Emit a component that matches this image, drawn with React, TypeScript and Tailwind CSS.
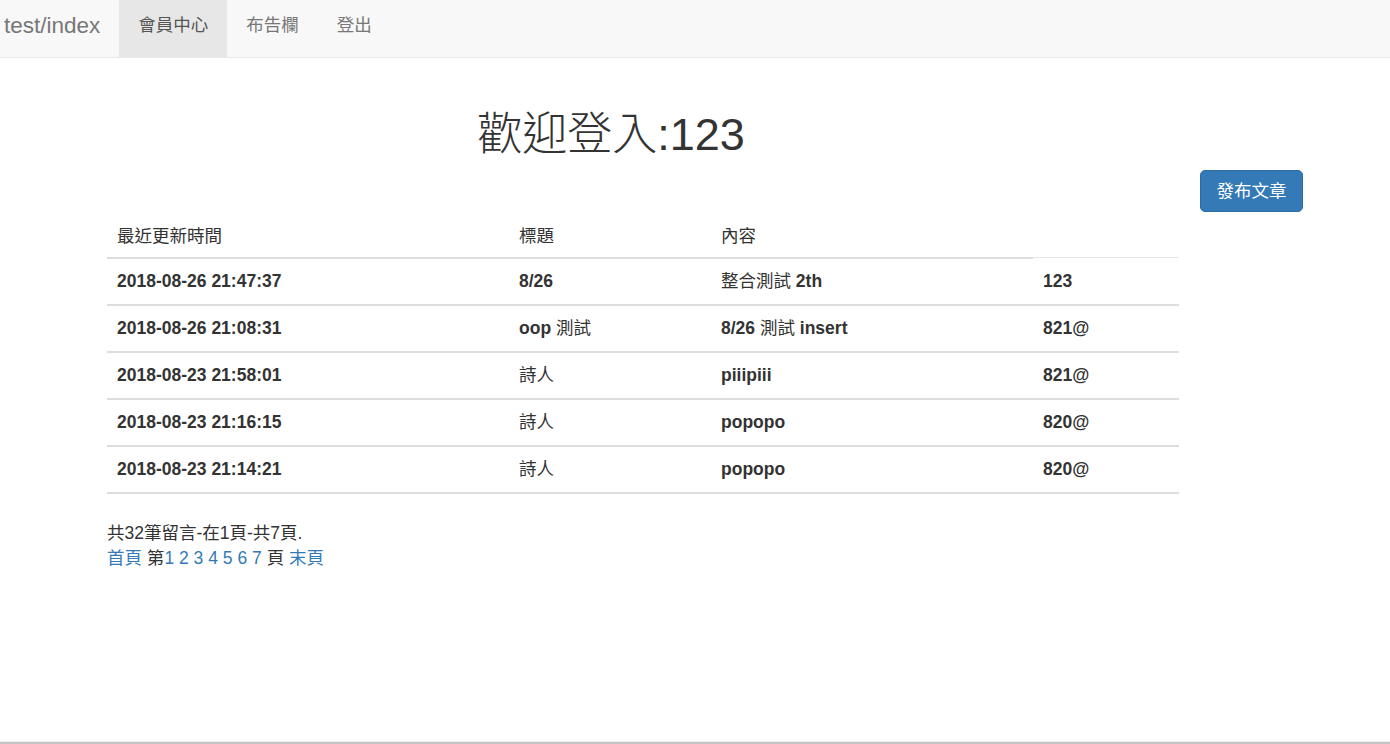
const font = "font-['Liberation_Sans','Noto_Sans_CJK_TC',sans-serif]";

const rows = [
  ["2018-08-26 21:47:37", "8/26", "整合測試 2th", "123"],
  ["2018-08-26 21:08:31", "oop 測試", "8/26 測試 insert", "821@"],
  ["2018-08-23 21:58:01", "詩人", "piiipiii", "821@"],
  ["2018-08-23 21:16:15", "詩人", "popopo", "820@"],
  ["2018-08-23 21:14:21", "詩人", "popopo", "820@"],
];

const cols = "grid grid-cols-[402px_202px_322px_146px]";

// CJK glyphs in the bold cells render at normal weight, like the old fallback font
function Mixed({ text }: { text: string }) {
  const parts = text.split(/([\u3400-\u9fff]+)/).filter((p) => p !== "");
  return (
    <>
      {parts.map((p, i) =>
        /[\u3400-\u9fff]/.test(p) ? (
          <span key={i} className="font-normal">
            {p}
          </span>
        ) : (
          <span key={i}>{p}</span>
        )
      )}
    </>
  );
}

function Navbar() {
  const items = ["會員中心", "布告欄", "登出"];
  return (
    <div className="flex h-[58px] bg-[#f8f8f8] border-b border-[#e7e7e7]">
      <a className="pl-[4px] pr-[19px] text-[22.5px] leading-[51px] text-[#777]">
        test/index
      </a>
      {items.map((item, i) => (
        <a
          key={item}
          className={`px-[19px] text-[17.5px] leading-[51px] ${
            i === 0 ? "bg-[#e7e7e7] text-[#555]" : "text-[#777]"
          }`}
        >
          {item}
        </a>
      ))}
    </div>
  );
}

export default function App() {
  return (
    <div className={`${font} flex min-h-screen flex-col bg-white text-[#333]`}>
      <Navbar />

      <div className="w-[1222px] mt-[52px] text-center">
        <h1 className="text-[45px] leading-[50px] font-light">歡迎登入:123</h1>
      </div>

      <div className="flex justify-end pr-[87px] mt-[10px]">
        <button className="h-[42px] w-[103px] rounded-[5px] bg-[#337ab7] border border-[#2e6da4] text-[17.5px] text-white">
          發布文章
        </button>
      </div>

      <div className="ml-[107px] w-[1072px] text-[17.5px]">
        <div className={cols}>
          <div className="px-[10px] pt-[12px] pb-[9px] leading-[24px] border-b-2 border-[#ddd]">最近更新時間</div>
          <div className="px-[10px] pt-[12px] pb-[9px] leading-[24px] border-b-2 border-[#ddd]">標題</div>
          <div className="px-[10px] pt-[12px] pb-[9px] leading-[24px] border-b-2 border-[#ddd]">內容</div>
          <div className="border-b border-[#e8e8e8] mb-px" />
        </div>
        {rows.map((r, i) => (
          <div key={i} className={`${cols} border-b-2 border-[#ddd] font-bold`}>
            {r.map((c, j) => (
              <div key={j} className="px-[10px] py-[10px] leading-[25px]">
                <Mixed text={c} />
              </div>
            ))}
          </div>
        ))}

        <div className="mt-[27px] leading-[25px]">
          <p>共32筆留言-在1頁-共7頁.</p>
          <p>
            <a className="text-[#337ab7]">首頁</a> 第
            {[1, 2, 3, 4, 5, 6, 7].map((n) => (
              <span key={n}>
                <a className="text-[#337ab7]">{n}</a>{" "}
              </span>
            ))}
            頁 <a className="text-[#337ab7]">末頁</a>
          </p>
        </div>
      </div>

      <div className="mt-auto h-[3px] border-t border-[#ececec] bg-[#c4c4c4]" />
    </div>
  );
}
